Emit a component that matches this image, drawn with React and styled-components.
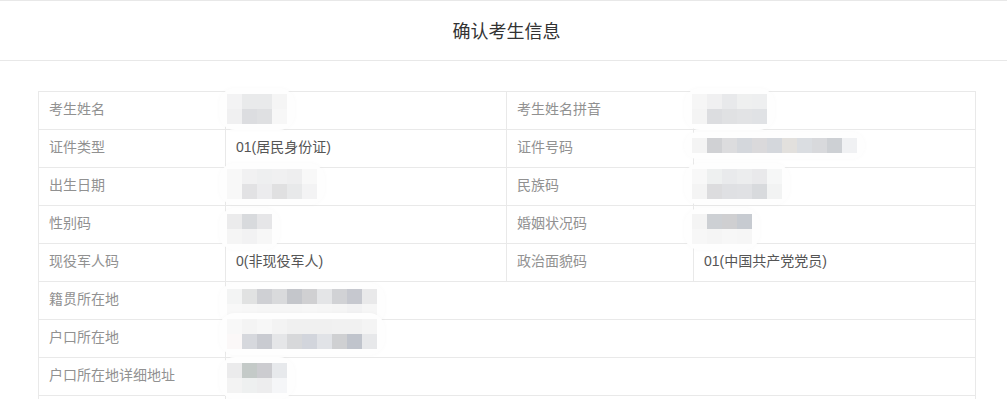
import React from "react";
import styled, { createGlobalStyle } from "styled-components";

const GlobalStyle = createGlobalStyle`
  html, body {
    margin: 0;
    padding: 0;
    background: #fff;
    overflow: hidden;
  }
  body {
    font-family: "Liberation Sans", "Noto Sans CJK SC", sans-serif;
  }
`;

const Page = styled.div`
  height: 399px;
  overflow: hidden;
`;

const Header = styled.div`
  height: 59px;
  border-top: 1px solid #e8e8e8;
  border-bottom: 1px solid #e8e8e8;
  padding: 0 32px 2px 38px;
  box-sizing: border-box;
  height: 61px;
  display: flex;
  align-items: center;
  justify-content: center;
  font-size: 18px;
  color: #333;
`;

const Body = styled.div`
  padding: 30px 0 0 38px;
`;

const Table = styled.table`
  width: 938px;
  border-collapse: collapse;
  table-layout: fixed;
  font-size: 14px;
`;

const Row = styled.tr`
  height: 38px;
`;

const Cell = styled.td`
  border: 1px solid #e9e9e9;
  padding: 0 10px 3px;
  line-height: 20px;
  position: relative;
  white-space: nowrap;
  color: ${(p) => (p.$label ? "#919191" : "#555")};
`;

const Mosaic = styled.div`
  position: absolute;
  left: ${(p) => p.$x}px;
  top: ${(p) => p.$y}px;
  z-index: 2;
  display: grid;
  grid-template-columns: repeat(${(p) => p.$cols}, 15px);
  grid-auto-rows: 15px;

  &::before {
    content: "";
    position: absolute;
    inset: -6px -8px;
    border-radius: 16px;
    background: #fefefe;
    box-shadow: 0 0 5px rgba(0, 0, 0, 0.025);
    z-index: -1;
  }
`;

const Pixel = styled.span`
  background: ${(p) => p.$c};
`;

// blurred values, offsets from the cell's top-left corner
const mosaics = {
  name: {
    x: 1, y: 2,
    grid: [
      ["#f3f3f4", "#e9eaeb", "#e9eaeb", "#f5f5f5"],
      ["#f0f0f1", "#dcdde0", "#dfe0e2", "#f7f7f7"],
    ],
  },
  pinyin: {
    x: -2, y: 2,
    grid: [
      ["#f6f6f6", "#f0f0f1", "#e8e9eb", "#eff0f0", "#eeeff0"],
      ["#f4f4f4", "#dcdde0", "#e0e1e3", "#e2e3e5", "#e0e2e5"],
    ],
  },
  idno: {
    x: -2, y: 8,
    grid: [
      ["#f4f4f4", "#d0d1d4", "#dcdcde", "#d4d7dc", "#dad9db", "#d4d7dc",
        "#e2e0dd", "#dadde1", "#d8d9dc", "#cdd0d4", "#f0f1f3"],
    ],
  },
  birth: {
    x: 1, y: 1,
    grid: [
      ["#f8f8f8", "#f1f1f2", "#eeeff0", "#f0f0f1", "#eeeeef", "#f8f8f8"],
      ["#f8f8f8", "#e2e2e4", "#ececee", "#e0e0e1", "#e8e9ea", "#f3f3f4"],
    ],
  },
  ethnic: {
    x: -2, y: 1,
    grid: [
      ["#f8f8f8", "#eef0f0", "#e9eaec", "#ecedee", "#e9e9eb", "#f6f7f7"],
      ["#f4f4f4", "#dcdcde", "#dfe0e3", "#e0e1e4", "#d8dadd", "#f2f3f3"],
    ],
  },
  gender: {
    x: 1, y: 8,
    grid: [
      ["#ebebec", "#d8dadd", "#e6e6e8"],
      ["#f5f5f5", "#f2f2f3", "#f7f7f7"],
    ],
  },
  marital: {
    x: -2, y: 8,
    grid: [
      ["#f4f4f4", "#cdd0d4", "#cfcfd1", "#c7cbd1"],
      ["#f7f7f7", "#f5f5f5", "#f7f7f7", "#f6f6f6"],
    ],
  },
  native: {
    x: 1, y: 7,
    grid: [
      ["#f3f4f4", "#e1e2e2", "#cfd0d4", "#d9dadc", "#c4c6cb",
        "#d0d0d2", "#e4e5e7", "#d1d2d5", "#c6c8cf", "#e9e9ea"],
      ["#f8f8f8", "#f7f7f7", "#f6f6f6", "#f6f6f6", "#f6f6f6",
        "#f7f7f7", "#f6f6f6", "#f5f5f5", "#f2f2f3", "#f6f6f6"],
    ],
  },
  hukou: {
    x: 1, y: -1,
    grid: [
      ["#f8f8f8", "#f4f4f4", "#f7f7f7", "#f3f3f3", "#f0f0f0",
        "#f0f0f0", "#f0f0f0", "#f1f1f1", "#f1f1f1", "#f4f4f4"],
      ["#fbf8f8", "#d6d8dd", "#c9cbd1", "#e5e6e8", "#d7d8da",
        "#d2d5dc", "#e1e3e7", "#cfd0d2", "#c0c4cc", "#e7e8ea"],
    ],
  },
  address: {
    x: 1, y: 5,
    grid: [
      ["#ebebec", "#c4cac8", "#ccccd0", "#e7e9ec"],
      ["#f3f3f3", "#eef0f0", "#ededee", "#f5f6f8"],
    ],
  },
};

const Blurred = ({ id }) => {
  const m = mosaics[id];
  return (
    <Mosaic $x={m.x} $y={m.y} $cols={m.grid[0].length}>
      {m.grid.flat().map((c, i) => (
        <Pixel key={i} $c={c} />
      ))}
    </Mosaic>
  );
};

const Value = ({ v }) =>
  v && v.m ? <Blurred id={v.m} /> : v || null;

const rows = [
  { l1: "考生姓名", v1: { m: "name" }, l2: "考生姓名拼音", v2: { m: "pinyin" } },
  { l1: "证件类型", v1: "01(居民身份证)", l2: "证件号码", v2: { m: "idno" } },
  { l1: "出生日期", v1: { m: "birth" }, l2: "民族码", v2: { m: "ethnic" } },
  { l1: "性别码", v1: { m: "gender" }, l2: "婚姻状况码", v2: { m: "marital" } },
  { l1: "现役军人码", v1: "0(非现役军人)", l2: "政治面貌码", v2: "01(中国共产党党员)" },
  { l1: "籍贯所在地", v1: { m: "native" } },
  { l1: "户口所在地", v1: { m: "hukou" } },
  { l1: "户口所在地详细地址", v1: { m: "address" } },
  { l1: "", v1: "" },
];

export default function App() {
  return (
    <Page>
      <GlobalStyle />
      <Header>确认考生信息</Header>
      <Body>
        <Table>
          <colgroup>
            <col style={{ width: 187 }} />
            <col style={{ width: 281 }} />
            <col style={{ width: 187 }} />
            <col style={{ width: 282 }} />
          </colgroup>
          <tbody>
            {rows.map((r, i) => (
              <Row key={i}>
                <Cell $label>{r.l1}</Cell>
                {r.l2 !== undefined ? (
                  <>
                    <Cell><Value v={r.v1} /></Cell>
                    <Cell $label>{r.l2}</Cell>
                    <Cell><Value v={r.v2} /></Cell>
                  </>
                ) : (
                  <Cell colSpan={3}><Value v={r.v1} /></Cell>
                )}
              </Row>
            ))}
          </tbody>
        </Table>
      </Body>
    </Page>
  );
}
